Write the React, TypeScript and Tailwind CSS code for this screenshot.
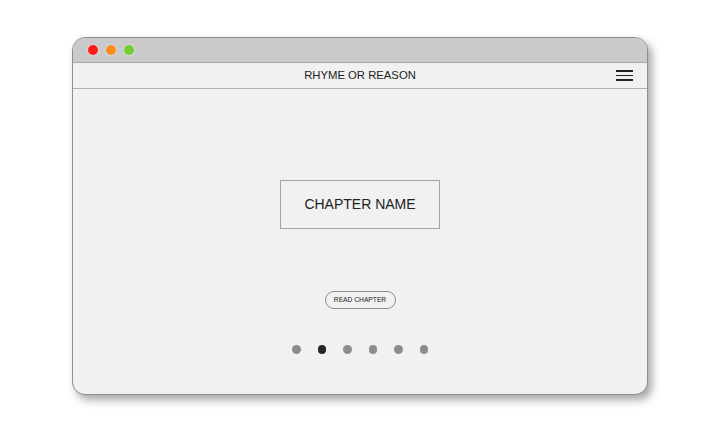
import React from "react";

const dots = [false, true, false, false, false, false];

const App: React.FC = () => {
  return (
    <div className="w-[720px] h-[432px] bg-white pt-[37px] pl-[72px] font-['Liberation_Sans',Arial,sans-serif]">
      {/* окно браузера */}
      <div className="w-[576px] h-[358px] flex flex-col rounded-[13px] border border-[#8e8e8e] bg-[#f1f1f1] overflow-hidden shadow-[4px_5px_8px_rgba(0,0,0,0.35)]">
        <div className="h-[25px] shrink-0 bg-[#cacaca] border-b border-[#a9a9a9] flex items-center gap-[8px] pl-[15px]">
          <span className="w-[10px] h-[10px] rounded-full bg-[#ff1a1a] ring-1 ring-[#d9d9d9]" />
          <span className="w-[10px] h-[10px] rounded-full bg-[#ff8c1a] ring-1 ring-[#d9d9d9]" />
          <span className="w-[10px] h-[10px] rounded-full bg-[#73cc33] ring-1 ring-[#d9d9d9]" />
        </div>

        <div className="h-[26px] shrink-0 border-b border-[#b0b0b0] relative flex items-center justify-center">
          <span className="text-[11.3px] text-[#222]">RHYME OR REASON</span>
          <div className="absolute right-[14px] top-[7px] w-[17px] flex flex-col gap-[3px]">
            <span className="h-[1.5px] bg-[#222]" />
            <span className="h-[1.5px] bg-[#222]" />
            <span className="h-[1.5px] bg-[#222]" />
          </div>
        </div>

        <div className="flex-1 flex flex-col items-center pt-[91px]">
          <div className="w-[160px] h-[49px] border border-[#a3a3a3] flex items-center justify-center">
            <span className="text-[14px] text-[#222]">CHAPTER NAME</span>
          </div>

          <button className="mt-[62px] w-[71px] h-[18px] rounded-full border border-[#8a8a8a] bg-[#f1f1f1] flex items-center justify-center">
            <span className="text-[6.7px] text-[#222]">READ CHAPTER</span>
          </button>

          <div className="mt-[36px] flex gap-[17px]">
            {dots.map((active, i) => (
              <span
                key={i}
                className={`w-[8.5px] h-[8.5px] rounded-full ${active ? "bg-[#262626]" : "bg-[#8c8c8c]"}`}
              />
            ))}
          </div>
        </div>
      </div>
    </div>
  );
};

export default App;
